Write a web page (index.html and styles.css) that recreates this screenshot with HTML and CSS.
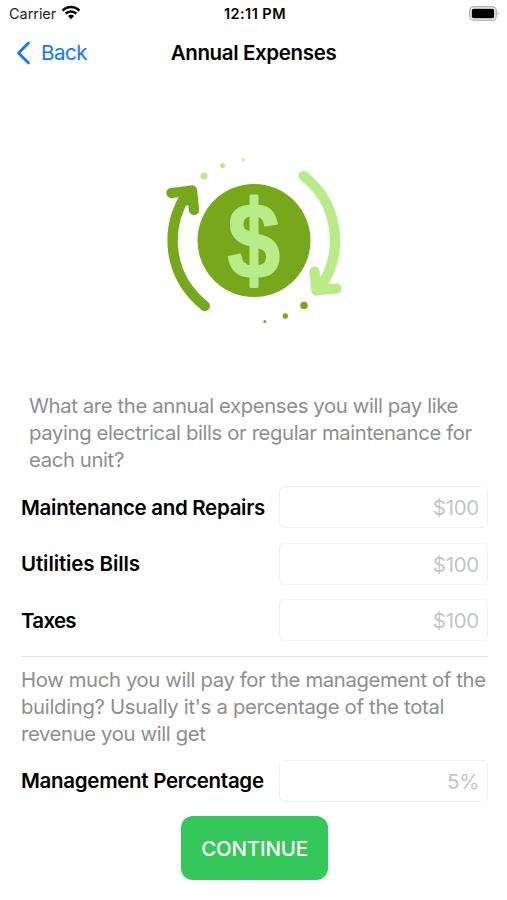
FILE: index.html
```html
<!DOCTYPE html>
<html lang="en">
<head>
<meta charset="utf-8">
<title>Annual Expenses</title>
<link rel="stylesheet" href="styles.css">
</head>
<body>
<div class="status">
  <div class="carrier"><span>Carrier</span>
    <svg width="20" height="15" viewBox="0 0 20 15" fill="none" stroke="#000" stroke-width="2.5"><path d="M1.6 5.6a11.7 11.7 0 0 1 16.8 0"/><path d="M4.6 8.7a7.6 7.6 0 0 1 10.800 0"/><path d="M10 14.200 6.900 11.100a4.400 4.400 0 0 1 6.200 0z" fill="#000" stroke="none"/></svg>
  </div>
  <div class="time">12:11 PM</div>
  <svg class="battery" width="32" height="16" viewBox="0 0 32 16"><rect x=".8" y=".8" width="26.4" height="13.4" rx="4" fill="#fff" stroke="#b5b5b5" stroke-width="1.5"/><rect x="2.800" y="2.700" width="22.400" height="9.600" rx="1.800"/><path d="M28.600 5.200q2.300 2.300 0 4.600z" fill="#b5b5b5"/></svg>
</div>
<header class="nav">
  <a class="back"><svg width="15" height="24" viewBox="0 0 15 24" fill="none" stroke="#0a7aff" stroke-width="2.7" stroke-linecap="round" stroke-linejoin="round"><path d="M12.500 2 2.500 12l10 10"/></svg><span>Back</span></a>
  <h1>Annual Expenses</h1>
</header>
<main>
  <svg class="hero" width="210" height="190" viewBox="150 145 210 190" fill="none" stroke-linecap="round" stroke-linejoin="round">
    <circle cx="254" cy="240.500" r="56.500" fill="#77a81c"/>
    <text transform="translate(253.700 278) scale(.89 1)" text-anchor="middle" class="dollar">$</text>
    <rect x="249.500" y="194.500" width="9" height="93.500" rx="1.500" fill="#b9ec89"/>
    <g stroke="#77a81c" stroke-width="10.300"><path d="M204.800 306C169 277 163 231 187 193"/><path d="M171.500 193l20.500-2.500 2 19.500"/><path d="M179 195l9-2 3 12-8 1z" fill="#77a81c" stroke="none"/></g>
    <g stroke="#b9ec89" stroke-width="10.300"><path d="M303.500 176C338 202 345 252 320 288"/><path d="M314.500 271.500l2 19 20-2"/><path d="M318 276l6 1 5 9-9 3z" fill="#b9ec89" stroke="none"/></g>
    <g fill="#b9ec89"><circle cx="204" cy="176" r="3.600"/><circle cx="222.500" cy="165.500" r="2.500"/><circle cx="243" cy="160" r="1.400"/></g>
    <g fill="#77a81c"><circle cx="304" cy="305.500" r="3.800"/><circle cx="285.300" cy="316" r="2.700"/><circle cx="264.800" cy="321.500" r="1.500"/></g>
  </svg>
  <p class="intro">What are the annual expenses you will pay like<br>paying electrical bills or regular maintenance for<br>each unit?</p>
  <div class="row"><span class="label">Maintenance and Repairs</span><div class="field">$100</div></div>
  <div class="row"><span class="label utilities">Utilities Bills</span><div class="field">$100</div></div>
  <div class="row"><span class="label taxes">Taxes</span><div class="field">$100</div></div>
  <hr>
  <p class="management">How much you will pay for the management of the<br><span class="wide">building? Usually it's a percentage of the total</span><br>revenue you will get</p>
  <div class="row"><span class="label">Management Percentage</span><div class="field">5%</div></div>
  <button>CONTINUE</button>
</main>
</body>
</html>
```
FILE: styles.css
```css
* { box-sizing: border-box; }
body { margin: 0; width: 507px; height: 900px; background: #fff; color: #000; font: 20.5px/27px Inter, "Liberation Sans", sans-serif; letter-spacing: -0.3px; overflow: hidden; }
.status { display: grid; grid-template-columns: 1fr auto 1fr; align-items: center; height: 27px; padding: 0 6px 0 9px; font-size: 14.5px; letter-spacing: 0; }
.carrier { display: flex; align-items: center; gap: 5px; color: #222; letter-spacing: -0.05px; }
.carrier svg { margin-top: -2px; }
.time { font-weight: 600; font-size: 14.5px; letter-spacing: 0.45px; }
.battery { justify-self: end; }
.nav { display: grid; grid-template-columns: 1fr auto 1fr; align-items: center; height: 51px; padding: 0 16px; }
.back { display: flex; align-items: center; gap: 10px; color: #0a7aff; letter-spacing: -0.5px; }
h1 { margin: 0; font-size: 20.5px; line-height: 27px; font-weight: 600; letter-spacing: -0.36px; }
main { display: flex; flex-direction: column; padding: 67px 19px 0 21px; }
.hero { margin-left: 129px; }
.dollar { font: bold 107px "Liberation Sans", sans-serif; fill: #b9ec89; stroke: #b9ec89; stroke-width: 1.5px; letter-spacing: 0; }
p { margin: 0; color: #8e8e8e; white-space: nowrap; font-size: 20.3px; letter-spacing: -0.37px; }
.wide { letter-spacing: -0.3px; }
.intro { margin: 57px 0 13px 8px; }
.row { display: flex; align-items: center; justify-content: space-between; height: 42px; margin-bottom: 14.5px; }
.label { font-weight: 600; white-space: nowrap; }
.utilities { letter-spacing: -0.1px; }
.taxes { letter-spacing: -0.7px; }
.field { width: 209px; height: 42px; padding: 0 8px; border: 1px solid #efefef; border-radius: 6px; line-height: 41px; text-align: right; color: #c4c4c6; }
hr { width: 100%; height: 1px; margin: 0 0 9px; border: 0; background: #e4e4e4; }
.management { margin-bottom: 13px; }
button { align-self: center; width: 147px; height: 64px; padding: 0; border: 0; border-radius: 12px; background: #34c759; color: #fff; font: 500 20.5px/66px Inter, sans-serif; letter-spacing: -0.2px; }
```
